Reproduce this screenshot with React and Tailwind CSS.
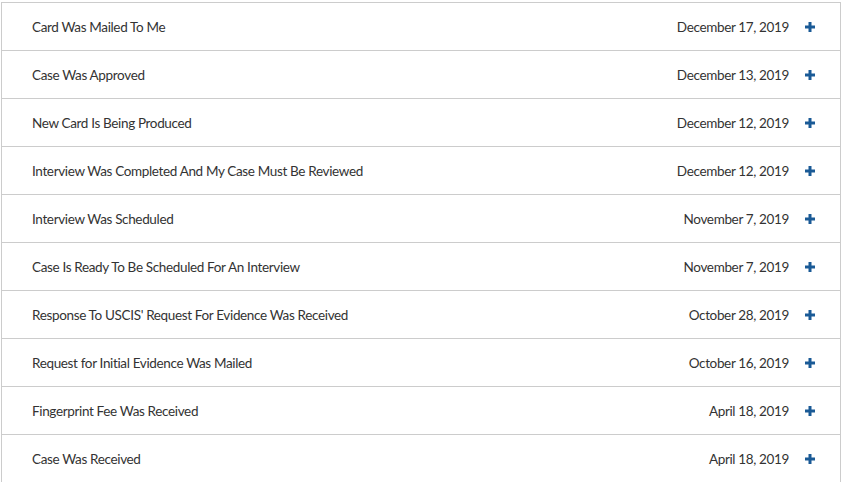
import React from 'react';

const events = [
    { title: 'Card Was Mailed To Me', date: 'December 17, 2019' },
    { title: 'Case Was Approved', date: 'December 13, 2019' },
    { title: 'New Card Is Being Produced', date: 'December 12, 2019' },
    { title: 'Interview Was Completed And My Case Must Be Reviewed', date: 'December 12, 2019' },
    { title: 'Interview Was Scheduled', date: 'November 7, 2019' },
    { title: 'Case Is Ready To Be Scheduled For An Interview', date: 'November 7, 2019' },
    { title: "Response To USCIS' Request For Evidence Was Received", date: 'October 28, 2019' },
    { title: 'Request for Initial Evidence Was Mailed', date: 'October 16, 2019' },
    { title: 'Fingerprint Fee Was Received', date: 'April 18, 2019' },
    { title: 'Case Was Received', date: 'April 18, 2019' },
];

const PlusIcon = () => (
    <svg width="10" height="10" viewBox="0 0 10 10" className="block shrink-0">
        <rect x="0" y="3.5" width="10" height="3" fill="#1a5a96" />
        <rect x="3.5" y="0" width="3" height="10" fill="#1a5a96" />
    </svg>
);

const CaseHistory = () => {
    return (
        <div className="min-h-screen bg-white pt-[2px] pl-[1px] font-['Lato',sans-serif]">
            <div className="w-[840px] border-x border-t border-[#cccccc]">
                {events.map((item, i) => (
                    <div
                        key={i}
                        className="flex h-[48px] items-center border-b border-[#cccccc] pl-[30px] pr-[25px] text-[13.5px] tracking-[-0.35px] text-[#333333]"
                    >
                        <span className="flex-1 pt-[2px]">{item.title}</span>
                        <span className="pt-[2px]">{item.date}</span>
                        <span className="ml-[16px]"><PlusIcon /></span>
                    </div>
                ))}
            </div>
        </div>
    );
};

export default CaseHistory;
